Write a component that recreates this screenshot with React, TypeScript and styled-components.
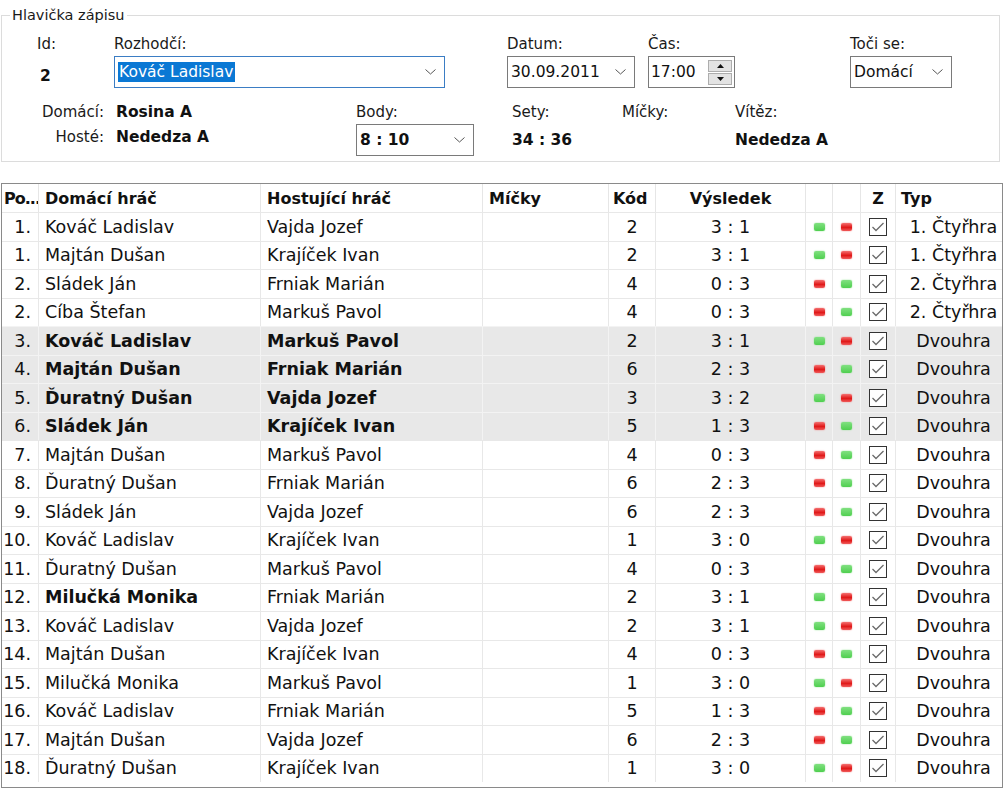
import React from "react";
import styled, { createGlobalStyle } from "styled-components";

const GlobalStyle = createGlobalStyle`
  html, body {
    margin: 0;
    padding: 0;
    background: #ffffff;
  }
  body {
    font-family: "DejaVu Sans", Verdana, sans-serif;
    color: #111111;
  }
`;

const Page = styled.div`
  width: 1003px;
  height: 796px;
  padding: 6px 0 0 1px;
  box-sizing: border-box;
  overflow: hidden;
`;

/* ---------- header group box ---------- */

const GroupBox = styled.fieldset`
  width: 999px;
  box-sizing: border-box;
  margin: 0;
  padding: 11px 0 5px 0;
  border: 1px solid #dcdcdc;
  border-radius: 0;
`;

const Legend = styled.legend`
  margin-left: 8px;
  padding: 0 2px;
  font-size: 14.5px;
  line-height: 18px;
  color: #1a1a1a;
`;

const FieldRow = styled.div<{ $gap?: number }>`
  display: flex;
  align-items: flex-start;
  margin-top: ${({ $gap }) => $gap ?? 0}px;
`;

const Field = styled.div<{ $left: number; $width: number }>`
  margin-left: ${({ $left }) => $left}px;
  width: ${({ $width }) => $width}px;
  flex: none;
  display: flex;
  flex-direction: column;
  gap: 3px;
`;

const Label = styled.div`
  font-size: 15px;
  line-height: 18px;
  color: #1a1a1a;
  white-space: nowrap;
`;

const BoldValue = styled.div<{ $pad?: number; $indent?: number }>`
  height: 32px;
  display: flex;
  align-items: center;
  padding-top: ${({ $pad }) => $pad ?? 0}px;
  padding-left: ${({ $indent }) => $indent ?? 0}px;
  box-sizing: border-box;
  font-size: 15.5px;
  font-weight: bold;
  color: #111111;
  white-space: nowrap;
`;

const Combo = styled.div<{ $width: number; $focused?: boolean }>`
  width: ${({ $width }) => $width}px;
  height: 32px;
  box-sizing: border-box;
  border: 1px solid ${({ $focused }) => ($focused ? "#3b7dc4" : "#7a7a7a")};
  background: #ffffff;
  display: flex;
  align-items: center;
  padding: 0 8px 0 3px;
  font-size: 15.5px;
  color: #111111;
`;

const ComboText = styled.span<{ $selected?: boolean; $bold?: boolean }>`
  flex: 1;
  white-space: nowrap;
  font-weight: ${({ $bold }) => ($bold ? "bold" : "normal")};
  & > span {
    padding: 1px 2px 1px 1px;
    background: ${({ $selected }) => ($selected ? "#0a78d4" : "transparent")};
    color: ${({ $selected }) => ($selected ? "#ffffff" : "inherit")};
  }
`;

const SpinBox = styled.div`
  width: 87px;
  height: 32px;
  box-sizing: border-box;
  border: 1px solid #7a7a7a;
  display: flex;
  align-items: center;
  padding: 0 2px 0 2px;
  font-size: 15.5px;
`;

const SpinText = styled.span`
  flex: 1;
`;

const SpinButtons = styled.div`
  display: flex;
  flex-direction: column;
  gap: 1px;
`;

const SpinButton = styled.div`
  width: 24px;
  height: 12px;
  box-sizing: border-box;
  border: 1px solid #adadad;
  background: #e3e3e3;
  display: flex;
  align-items: center;
  justify-content: center;
`;

const TeamGrid = styled.div`
  margin-left: 25px;
  width: 329px;
  flex: none;
  display: grid;
  grid-template-columns: 77px auto;
  column-gap: 12px;
  row-gap: 7px;
  align-items: center;
`;

const TeamLabel = styled.div`
  text-align: right;
  font-size: 15px;
  line-height: 18px;
  color: #1a1a1a;
`;

const TeamName = styled.div`
  font-size: 15.5px;
  line-height: 18px;
  font-weight: bold;
`;

const Chevron = () => (
  <svg width="11" height="6" viewBox="0 0 11 6">
    <polyline points="0.5,0.5 5.5,5 10.5,0.5" fill="none" stroke="#555" strokeWidth="1" />
  </svg>
);

const Triangle = ({ up }: { up?: boolean }) => (
  <svg width="7" height="4" viewBox="0 0 7 4">
    <polygon points={up ? "0,4 7,4 3.5,0" : "0,0 7,0 3.5,4"} fill="#111" />
  </svg>
);

/* ---------- match table ---------- */

const COLS = "37px 222px 222px 126px 47px 150px 27px 28px 35px 1fr";

const Table = styled.div`
  margin-top: 21px;
  width: 1002px;
  height: 605px;
  box-sizing: border-box;
  border: 1px solid #8a8a8a;
  background: #ffffff;
  overflow: hidden;
`;

const HeadRow = styled.div`
  display: grid;
  grid-template-columns: ${COLS};
  height: 28px;
`;

const HeadCell = styled.div<{ $align?: string; $pad?: number; $tight?: boolean }>`
  display: flex;
  align-items: center;
  justify-content: ${({ $align }) => $align ?? "flex-start"};
  padding-left: ${({ $pad }) => $pad ?? 6}px;
  border-right: 1px solid #e6e6e6;
  font-size: 16px;
  font-weight: bold;
  letter-spacing: ${({ $tight }) => ($tight ? "-1px" : "normal")};
  white-space: nowrap;
  overflow: hidden;
  &:last-child {
    border-right: none;
  }
`;

const Row = styled.div<{ $shaded?: boolean }>`
  display: grid;
  grid-template-columns: ${COLS};
  height: 28.5px;
  background: ${({ $shaded }) => ($shaded ? "#e8e8e8" : "#ffffff")};
  --line: ${({ $shaded }) => ($shaded ? "#f3f3f3" : "#e8e8e8")};
  border-top: 1px solid var(--line);
  box-sizing: border-box;
`;

const Cell = styled.div<{ $align?: string; $bold?: boolean; $pad?: number }>`
  display: flex;
  align-items: center;
  justify-content: ${({ $align }) => $align ?? "flex-start"};
  padding-left: ${({ $pad }) => $pad ?? 6}px;
  padding-right: ${({ $align }) => ($align === "flex-end" ? 7 : 0)}px;
  border-right: 1px solid var(--line);
  font-size: 17.5px;
  font-weight: ${({ $bold }) => ($bold ? "bold" : "normal")};
  white-space: nowrap;
  overflow: hidden;
  &:last-child {
    border-right: none;
  }
`;

const Lamp = styled.span<{ $on: boolean }>`
  width: 11px;
  height: 8px;
  border-radius: 2px;
  background: ${({ $on }) =>
    $on
      ? "linear-gradient(#80e080, #4fcf4f)"
      : "linear-gradient(#f47070 0%, #e01818 55%, #f05a5a 100%)"};
  box-shadow: 0 0 1.5px ${({ $on }) => ($on ? "#7fdc7f" : "#f07070")};
`;

const CheckBox = styled.span`
  width: 18px;
  height: 18px;
  box-sizing: border-box;
  border: 1px solid #333333;
  background: #ffffff;
  display: flex;
  align-items: center;
  justify-content: center;
`;

type Match = {
  pos: string;
  home: string;
  guest: string;
  code: number;
  result: string;
  homeWon: boolean;
  type: string;
  bold?: "both" | "home";
  shaded?: boolean;
};

const matches: Match[] = [
  { pos: "1.", home: "Kováč Ladislav", guest: "Vajda Jozef", code: 2, result: "3 : 1", homeWon: true, type: "1. Čtyřhra" },
  { pos: "1.", home: "Majtán Dušan", guest: "Krajíček Ivan", code: 2, result: "3 : 1", homeWon: true, type: "1. Čtyřhra" },
  { pos: "2.", home: "Sládek Ján", guest: "Frniak Marián", code: 4, result: "0 : 3", homeWon: false, type: "2. Čtyřhra" },
  { pos: "2.", home: "Cíba Štefan", guest: "Markuš Pavol", code: 4, result: "0 : 3", homeWon: false, type: "2. Čtyřhra" },
  { pos: "3.", home: "Kováč Ladislav", guest: "Markuš Pavol", code: 2, result: "3 : 1", homeWon: true, type: "Dvouhra", bold: "both", shaded: true },
  { pos: "4.", home: "Majtán Dušan", guest: "Frniak Marián", code: 6, result: "2 : 3", homeWon: false, type: "Dvouhra", bold: "both", shaded: true },
  { pos: "5.", home: "Ďuratný Dušan", guest: "Vajda Jozef", code: 3, result: "3 : 2", homeWon: true, type: "Dvouhra", bold: "both", shaded: true },
  { pos: "6.", home: "Sládek Ján", guest: "Krajíček Ivan", code: 5, result: "1 : 3", homeWon: false, type: "Dvouhra", bold: "both", shaded: true },
  { pos: "7.", home: "Majtán Dušan", guest: "Markuš Pavol", code: 4, result: "0 : 3", homeWon: false, type: "Dvouhra" },
  { pos: "8.", home: "Ďuratný Dušan", guest: "Frniak Marián", code: 6, result: "2 : 3", homeWon: false, type: "Dvouhra" },
  { pos: "9.", home: "Sládek Ján", guest: "Vajda Jozef", code: 6, result: "2 : 3", homeWon: false, type: "Dvouhra" },
  { pos: "10.", home: "Kováč Ladislav", guest: "Krajíček Ivan", code: 1, result: "3 : 0", homeWon: true, type: "Dvouhra" },
  { pos: "11.", home: "Ďuratný Dušan", guest: "Markuš Pavol", code: 4, result: "0 : 3", homeWon: false, type: "Dvouhra" },
  { pos: "12.", home: "Milučká Monika", guest: "Frniak Marián", code: 2, result: "3 : 1", homeWon: true, type: "Dvouhra", bold: "home" },
  { pos: "13.", home: "Kováč Ladislav", guest: "Vajda Jozef", code: 2, result: "3 : 1", homeWon: true, type: "Dvouhra" },
  { pos: "14.", home: "Majtán Dušan", guest: "Krajíček Ivan", code: 4, result: "0 : 3", homeWon: false, type: "Dvouhra" },
  { pos: "15.", home: "Milučká Monika", guest: "Markuš Pavol", code: 1, result: "3 : 0", homeWon: true, type: "Dvouhra" },
  { pos: "16.", home: "Kováč Ladislav", guest: "Frniak Marián", code: 5, result: "1 : 3", homeWon: false, type: "Dvouhra" },
  { pos: "17.", home: "Majtán Dušan", guest: "Vajda Jozef", code: 6, result: "2 : 3", homeWon: false, type: "Dvouhra" },
  { pos: "18.", home: "Ďuratný Dušan", guest: "Krajíček Ivan", code: 1, result: "3 : 0", homeWon: true, type: "Dvouhra" },
];

const Check = () => (
  <svg width="14" height="12" viewBox="0 0 14 12">
    <polyline points="1.5,6 5,9.5 12.5,2" fill="none" stroke="#6a6a6a" strokeWidth="1.3" />
  </svg>
);

const Header = () => (
  <GroupBox>
    <Legend>Hlavička zápisu</Legend>
    <FieldRow>
      <Field $left={35} $width={77}>
        <Label>Id:</Label>
        <BoldValue $pad={8} $indent={3}>2</BoldValue>
      </Field>
      <Field $left={0} $width={393}>
        <Label>Rozhodčí:</Label>
        <Combo $width={331} $focused>
          <ComboText $selected>
            <span>Kováč Ladislav</span>
          </ComboText>
          <Chevron />
        </Combo>
      </Field>
      <Field $left={0} $width={141}>
        <Label>Datum:</Label>
        <Combo $width={128}>
          <ComboText>30.09.2011</ComboText>
          <Chevron />
        </Combo>
      </Field>
      <Field $left={0} $width={202}>
        <Label>Čas:</Label>
        <SpinBox>
          <SpinText>17:00</SpinText>
          <SpinButtons>
            <SpinButton>
              <Triangle up />
            </SpinButton>
            <SpinButton>
              <Triangle />
            </SpinButton>
          </SpinButtons>
        </SpinBox>
      </Field>
      <Field $left={0} $width={110}>
        <Label>Toči se:</Label>
        <Combo $width={102}>
          <ComboText>Domácí</ComboText>
          <Chevron />
        </Combo>
      </Field>
    </FieldRow>
    <FieldRow $gap={15}>
      <TeamGrid>
        <TeamLabel>Domácí:</TeamLabel>
        <TeamName>Rosina A</TeamName>
        <TeamLabel>Hosté:</TeamLabel>
        <TeamName>Nededza A</TeamName>
      </TeamGrid>
      <Field $left={0} $width={156}>
        <Label>Body:</Label>
        <Combo $width={118}>
          <ComboText $bold>8 : 10</ComboText>
          <Chevron />
        </Combo>
      </Field>
      <Field $left={0} $width={110}>
        <Label>Sety:</Label>
        <BoldValue>34 : 36</BoldValue>
      </Field>
      <Field $left={0} $width={113}>
        <Label>Míčky:</Label>
      </Field>
      <Field $left={0} $width={150}>
        <Label>Vítěz:</Label>
        <BoldValue>Nededza A</BoldValue>
      </Field>
    </FieldRow>
  </GroupBox>
);

const App: React.FC = () => {
  return (
    <Page>
      <GlobalStyle />
      <Header />
      <Table>
        <HeadRow>
          <HeadCell $pad={2} $tight>Po...</HeadCell>
          <HeadCell>Domácí hráč</HeadCell>
          <HeadCell>Hostující hráč</HeadCell>
          <HeadCell>Míčky</HeadCell>
          <HeadCell $pad={4}>Kód</HeadCell>
          <HeadCell $align="center" $pad={0}>Výsledek</HeadCell>
          <HeadCell />
          <HeadCell />
          <HeadCell $align="center" $pad={0}>Z</HeadCell>
          <HeadCell $pad={5}>Typ</HeadCell>
        </HeadRow>
        {matches.map((m, i) => (
          <Row key={i} $shaded={m.shaded}>
            <Cell $align="flex-end" $pad={0}>{m.pos}</Cell>
            <Cell $bold={!!m.bold}>{m.home}</Cell>
            <Cell $bold={m.bold === "both"}>{m.guest}</Cell>
            <Cell />
            <Cell $align="center" $pad={0}>{m.code}</Cell>
            <Cell $align="center" $pad={0}>{m.result}</Cell>
            <Cell $align="center" $pad={0}>
              <Lamp $on={m.homeWon} />
            </Cell>
            <Cell $align="center" $pad={0}>
              <Lamp $on={!m.homeWon} />
            </Cell>
            <Cell $align="center" $pad={0}>
              <CheckBox>
                <Check />
              </CheckBox>
            </Cell>
            <Cell $align="center" $pad={9}>{m.type}</Cell>
          </Row>
        ))}
      </Table>
    </Page>
  );
};

export default App;
